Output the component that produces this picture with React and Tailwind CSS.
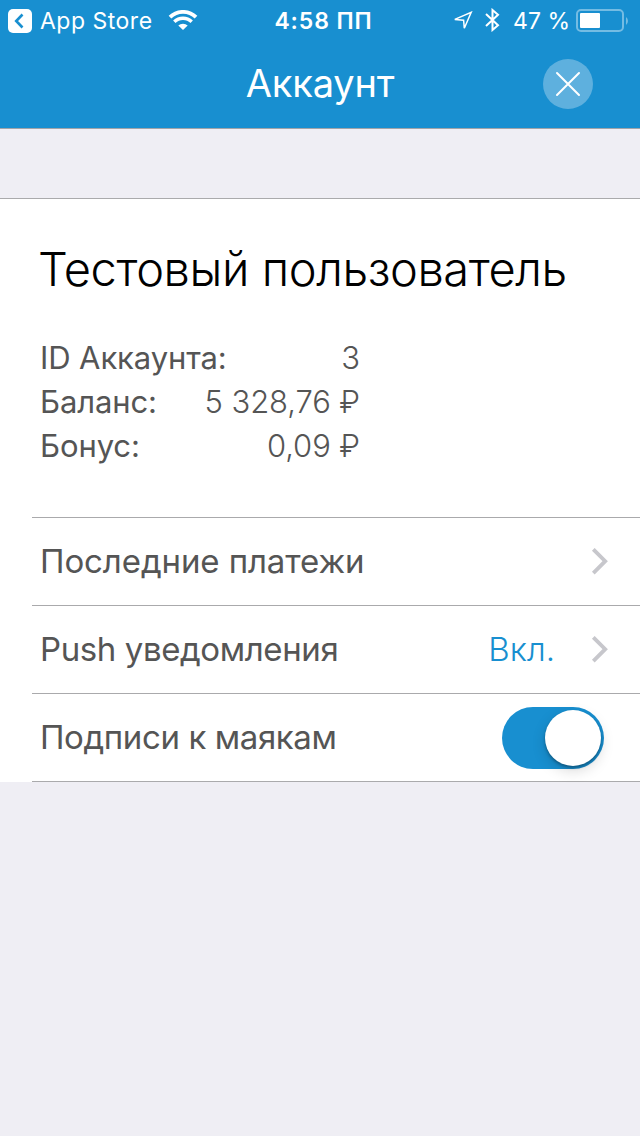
const details = [
    { label: "ID Аккаунта:", value: "3" },
    { label: "Баланс:", value: "5 328,76 ₽" },
    { label: "Бонус:", value: "0,09 ₽" },
];

const Chevron = () => (
    <svg className="ml-[36px] mr-[31px] h-[28px] w-[18px]" viewBox="0 0 18 28" fill="none">
        <path d="M2.3 1.3 L14.2 13.2 L2.3 25.1" stroke="#c7c7cc" strokeWidth="3.8" />
    </svg>
);

const StatusBar = () => (
    <div className="grid h-[42px] grid-cols-[240px_1fr_240px] items-center text-[23px] leading-none">
        <div className="flex items-center pl-[8px]">
            <svg className="h-[24px] w-[24px]" viewBox="0 0 24 24" fill="none">
                <rect width="24" height="24" rx="5" fill="#fff" />
                <path d="M14.5 5.5 L8.2 12 L14.5 18.5" stroke="#188fd0" strokeWidth="2.6" />
            </svg>
            <span className="ml-[8px] whitespace-nowrap tracking-[0.5px]">App Store</span>
            <svg className="-mt-[2px] ml-[15px] h-[20px] w-[30px]" viewBox="0 0 30 20" fill="none">
                <path d="M2 7.2 A18.5 18.5 0 0 1 28 7.2" stroke="#fff" strokeWidth="3.8" />
                <path d="M6.3 11.8 A12.3 12.3 0 0 1 23.7 11.8" stroke="#fff" strokeWidth="3.4" />
                <path d="M15 20 L10.3 15.6 A6.6 6.6 0 0 1 19.7 15.6 Z" fill="#fff" />
            </svg>
        </div>
        <div className="whitespace-nowrap pl-[7px] text-center font-semibold tracking-[0.9px]">4:58 ПП</div>
        <div className="flex items-center justify-end pr-[10px]">
            <svg className="h-[20px] w-[20px]" viewBox="0 0 20 20" fill="none">
                <path d="M1.8 8.4 L18.2 1.3 L11.3 17.3 L10.6 9.2 Z" stroke="#fff" strokeWidth="1.5" />
            </svg>
            <svg className="-mt-[2px] ml-[12px] h-[24px] w-[15px]" viewBox="0 0 15 24" fill="none">
                <path d="M1 6 L13 17.3 L7.5 22 V2 L13 6.7 L1 18" stroke="#fff" strokeWidth="2" />
            </svg>
            <span className="ml-[13px] whitespace-nowrap">47 %</span>
            <svg className="ml-[6px] h-[24px] w-[54px]" viewBox="0 0 54 24" fill="none">
                <rect x="1" y="1" width="46" height="21" rx="4" stroke="#74bce3" strokeWidth="2" />
                <rect x="4" y="4" width="20" height="15" rx="1" fill="#fff" />
                <path d="M50 8 A5 5 0 0 1 50 16 Z" fill="#74bce3" />
            </svg>
        </div>
    </div>
);

const App = () => {
    return (
        <div className="min-h-[1136px] w-[640px] bg-[#efeef4] font-['Inter','Noto_Sans',sans-serif] text-[#555]">
            <header className="h-[129px] border-b border-[#a0a4a9] bg-[#188fd0] text-white">
                <StatusBar />
                <div className="grid h-[84px] grid-cols-[200px_1fr_200px] items-center">
                    <span />
                    <h1 className="pb-[3px] text-center text-[38px] leading-none tracking-[-0.2px]">Аккаунт</h1>
                    <button className="mr-[47px] flex h-[50px] w-[50px] items-center justify-center justify-self-end rounded-full bg-[#5eb0de]" aria-label="Закрыть">
                        <svg className="h-[26px] w-[26px]" viewBox="0 0 26 26" fill="none">
                            <path d="M2 2 L24 24 M24 2 L2 24" stroke="#fff" strokeWidth="2" strokeLinecap="round" />
                        </svg>
                    </button>
                </div>
            </header>

            <main className="mt-[69px] border-t border-[#aaaaac] bg-white">
                <section className="h-[318px] pl-[40px] pt-[40px]">
                    <h2 className="-ml-[2px] whitespace-nowrap text-[47px] font-light leading-[60px] tracking-[-0.42px] text-black">
                        Тестовый пользователь
                    </h2>
                    <dl className="mt-[37px] w-[320px] text-[31px] leading-[44px]">
                        {details.map((item) => (
                            <div key={item.label} className="flex justify-between whitespace-nowrap">
                                <dt className="tracking-[-0.1px]">{item.label}</dt>
                                <dd className="font-light tracking-[-0.1px]">{item.value}</dd>
                            </div>
                        ))}
                    </dl>
                </section>

                <ul className="text-[33px] leading-none">
                    <li className="ml-[32px] flex h-[88px] items-center border-t border-[#aaaaac] pl-[8px]">
                        <span className="mr-auto tracking-[-0.1px]">Последние платежи</span>
                        <Chevron />
                    </li>
                    <li className="ml-[32px] flex h-[88px] items-center border-t border-[#aaaaac] pl-[8px]">
                        <span className="mr-auto tracking-[-0.4px]">Push уведомления</span>
                        <span className="font-light text-[#188fd0]">Вкл.</span>
                        <Chevron />
                    </li>
                    <li className="ml-[32px] flex h-[89px] items-center border-y border-[#aaaaac] pl-[8px]">
                        <span className="mr-auto tracking-[-0.4px]">Подписи к маякам</span>
                        <button className="mr-[36px] flex h-[62px] w-[102px] items-center justify-end rounded-full bg-[#188fd0] pr-[3px]" aria-label="Подписи к маякам">
                            <span className="h-[56px] w-[56px] rounded-full bg-white shadow-[0_5px_14px_rgba(0,0,0,0.15),0_2px_3px_rgba(0,0,0,0.3)]" />
                        </button>
                    </li>
                </ul>
            </main>
        </div>
    );
};

export default App;
